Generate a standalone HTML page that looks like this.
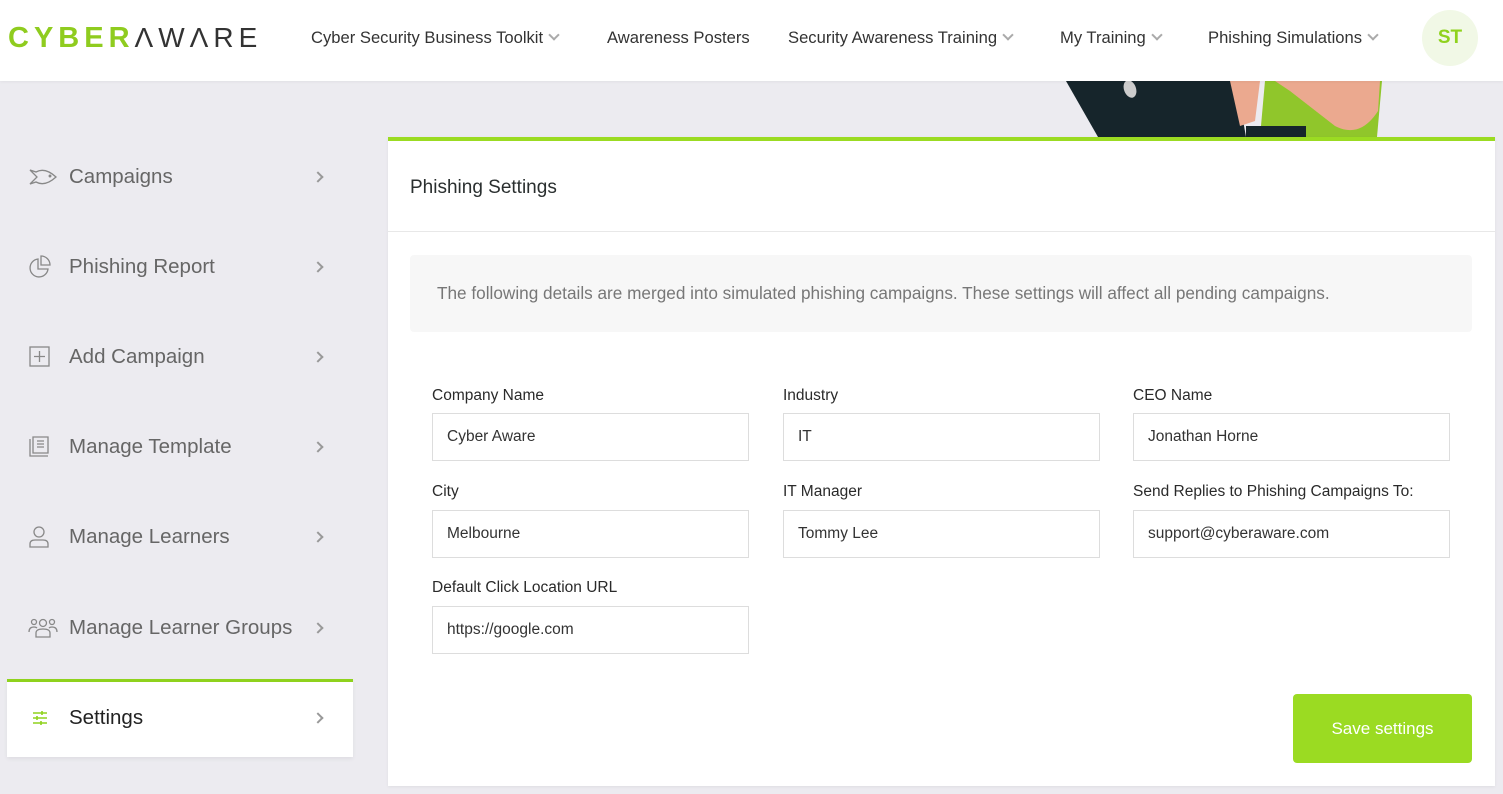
<!DOCTYPE html>
<html><head><meta charset="utf-8"><style>
*{box-sizing:border-box;margin:0;padding:0}
body{width:1503px;height:794px;overflow:hidden;background:#ecebf0;font-family:"Liberation Sans",sans-serif;position:relative;color:#333}
.hdr{position:absolute;left:0;top:0;width:1503px;height:81px;background:#fff;box-shadow:0 1px 3px rgba(0,0,0,.05)}
.logo{position:absolute;left:8px;top:22px;font-size:29px;letter-spacing:5px;line-height:32px}
.logo b{color:#8fcc1f;font-weight:bold}
.logo span{color:#333;font-weight:normal;font-size:28px}
.nav{position:absolute;top:28px;font-size:16.6px;color:#333;white-space:nowrap}
.nav .ch{display:inline-block;width:8px;height:8px;border-right:2px solid #aaa;border-bottom:2px solid #aaa;transform:rotate(45deg);margin-left:7px;position:relative;top:-4px}
.av{position:absolute;left:1422px;top:10px;width:56px;height:56px;border-radius:50%;background:#f1f8e6;color:#8fd21d;font-weight:bold;font-size:19px;text-align:center;line-height:56px}
.side{position:absolute;left:28px;font-size:20.5px;color:#666;width:300px;height:30px;line-height:30px}
.side svg{position:absolute;left:0;top:3px}
.side .t{position:absolute;left:41px}
.side .c{position:absolute;left:286px;top:11px;width:8px;height:8px;border-right:2px solid #999;border-top:2px solid #999;transform:rotate(45deg)}
.act{position:absolute;left:7px;top:679px;width:346px;height:78px;background:#fff;border-top:3px solid #8fd21d;box-shadow:0 2px 4px rgba(0,0,0,.06)}
.card{position:absolute;left:388px;top:137px;width:1107px;height:649px;background:#fff;border-top:4px solid #9bdb22;box-shadow:0 1px 3px rgba(0,0,0,.06)}
.ttl{position:absolute;left:22px;top:36px;font-size:19px;color:#2a2f2f}
.div{position:absolute;left:0;top:90px;width:100%;height:1px;background:#e8e8e8}
.info{position:absolute;left:22px;top:114px;width:1062px;height:77px;background:#f7f7f7;border-radius:4px;font-size:17.2px;color:#777;padding:28px 0 0 27px;white-space:nowrap}
.lb{position:absolute;font-size:15.5px;color:#2a2a2a}
.in{position:absolute;width:317px;height:48px;border:1px solid #ddd;font-size:15.5px;color:#333;padding:14px 0 0 14px}
.btn{position:absolute;left:905px;top:553px;width:179px;height:69px;background:#9bdb22;border-radius:4px;color:#fff;font-size:17px;text-align:center;line-height:69px}
</style></head><body>
<svg style="position:absolute;left:1060px;top:81px" width="330" height="56" viewBox="0 0 330 56">
<path d="M6 0 L65 0 L176 0 L186 56 L38 56 Z" fill="#16252b"/>
<ellipse cx="70" cy="8" rx="6" ry="9" fill="#ccc" transform="rotate(-20 70 8)"/>
<path d="M170 0 L200 0 L195 40 L180 45 Z" fill="#eba98f"/>
<path d="M205 0 L322 0 L317 56 L200 56 Z" fill="#90c62b"/>
<path d="M215 0 L320 0 L318 30 Q300 58 275 45 L230 10 Z" fill="#eba98f"/>
<rect x="186" y="45" width="60" height="11" fill="#16252b"/>
</svg>
<div class="hdr">
<div class="logo"><b>CYBER</b><span>ΛWΛRE</span></div>
<div class="nav" style="left:311px">Cyber Security Business Toolkit<i class="ch"></i></div>
<div class="nav" style="left:607px">Awareness Posters</div>
<div class="nav" style="left:788px">Security Awareness Training<i class="ch"></i></div>
<div class="nav" style="left:1060px">My Training<i class="ch"></i></div>
<div class="nav" style="left:1208px">Phishing Simulations<i class="ch"></i></div>
<div class="av">ST</div>
</div>

<div class="side" style="top:162px"><svg width="30" height="24" viewBox="0 0 30 24" fill="none" stroke="#888" stroke-width="1.3"><path d="M2 5 L9 12 L2 19 L8 17 Q17 22 28 12 Q17 2 8 7 Z"/><circle cx="22" cy="11" r="0.8" fill="#888"/></svg><span class="t">Campaigns</span><i class="c"></i></div>
<div class="side" style="top:252px"><svg width="24" height="24" viewBox="0 0 24 24" fill="none" stroke="#888" stroke-width="1.3"><path d="M10 4 A9 9 0 1 0 20 14 L10 14 Z"/><path d="M13 1 A9 9 0 0 1 22 10 L13 10 Z"/></svg><span class="t">Phishing Report</span><i class="c"></i></div>
<div class="side" style="top:342px"><svg width="24" height="24" viewBox="0 0 24 24" fill="none" stroke="#888" stroke-width="1.3"><rect x="2" y="2" width="19" height="19"/><path d="M11.5 6v11M6 11.5h11"/></svg><span class="t">Add Campaign</span><i class="c"></i></div>
<div class="side" style="top:432px"><svg width="24" height="24" viewBox="0 0 24 24" fill="none" stroke="#888" stroke-width="1.3"><path d="M2 4v17h18M5 2h15v16H5zM9 6h7M9 9h7M9 12h7"/></svg><span class="t">Manage Template</span><i class="c"></i></div>
<div class="side" style="top:522px"><svg width="24" height="24" viewBox="0 0 24 24" fill="none" stroke="#888" stroke-width="1.3"><circle cx="11" cy="7" r="5"/><path d="M2 22v-3q0-4 5-4h8q5 0 5 4v3z"/></svg><span class="t">Manage Learners</span><i class="c"></i></div>
<div class="side" style="top:613px"><svg width="30" height="24" viewBox="0 0 30 24" fill="none" stroke="#888" stroke-width="1.3"><circle cx="15" cy="7" r="3.5"/><circle cx="6" cy="6" r="2.5"/><circle cx="24" cy="6" r="2.5"/><path d="M8 21v-4q0-4 7-4t7 4v4zM1 16q0-5 5-5 2 0 3 1M29 16q0-5-5-5-2 0-3 1"/></svg><span class="t">Manage Learner Groups</span><i class="c"></i></div>
<div class="act"></div>
<div class="side" style="top:703px;color:#222"><svg width="24" height="24" viewBox="0 0 24 24" fill="none" stroke="#8fd21d" stroke-width="1.6"><path d="M5 7h14M5 12h14M5 17h14M14 5v4M9 10v4M13 15v4"/></svg><span class="t">Settings</span><i class="c"></i></div>

<div class="card">
<div class="ttl">Phishing Settings</div>
<div class="div"></div>
<div class="info">The following details are merged into simulated phishing campaigns. These settings will affect all pending campaigns.</div>
<div class="lb" style="left:44px;top:246px">Company Name</div>
<div class="lb" style="left:395px;top:246px">Industry</div>
<div class="lb" style="left:745px;top:246px">CEO Name</div>
<div class="in" style="left:44px;top:272px">Cyber Aware</div>
<div class="in" style="left:395px;top:272px">IT</div>
<div class="in" style="left:745px;top:272px">Jonathan Horne</div>
<div class="lb" style="left:44px;top:342px">City</div>
<div class="lb" style="left:395px;top:342px">IT Manager</div>
<div class="lb" style="left:745px;top:342px">Send Replies to Phishing Campaigns To:</div>
<div class="in" style="left:44px;top:369px">Melbourne</div>
<div class="in" style="left:395px;top:369px">Tommy Lee</div>
<div class="in" style="left:745px;top:369px">support@cyberaware.com</div>
<div class="lb" style="left:44px;top:438px">Default Click Location URL</div>
<div class="in" style="left:44px;top:465px">https://google.com</div>
<div class="btn">Save settings</div>
</div>
</body></html>
